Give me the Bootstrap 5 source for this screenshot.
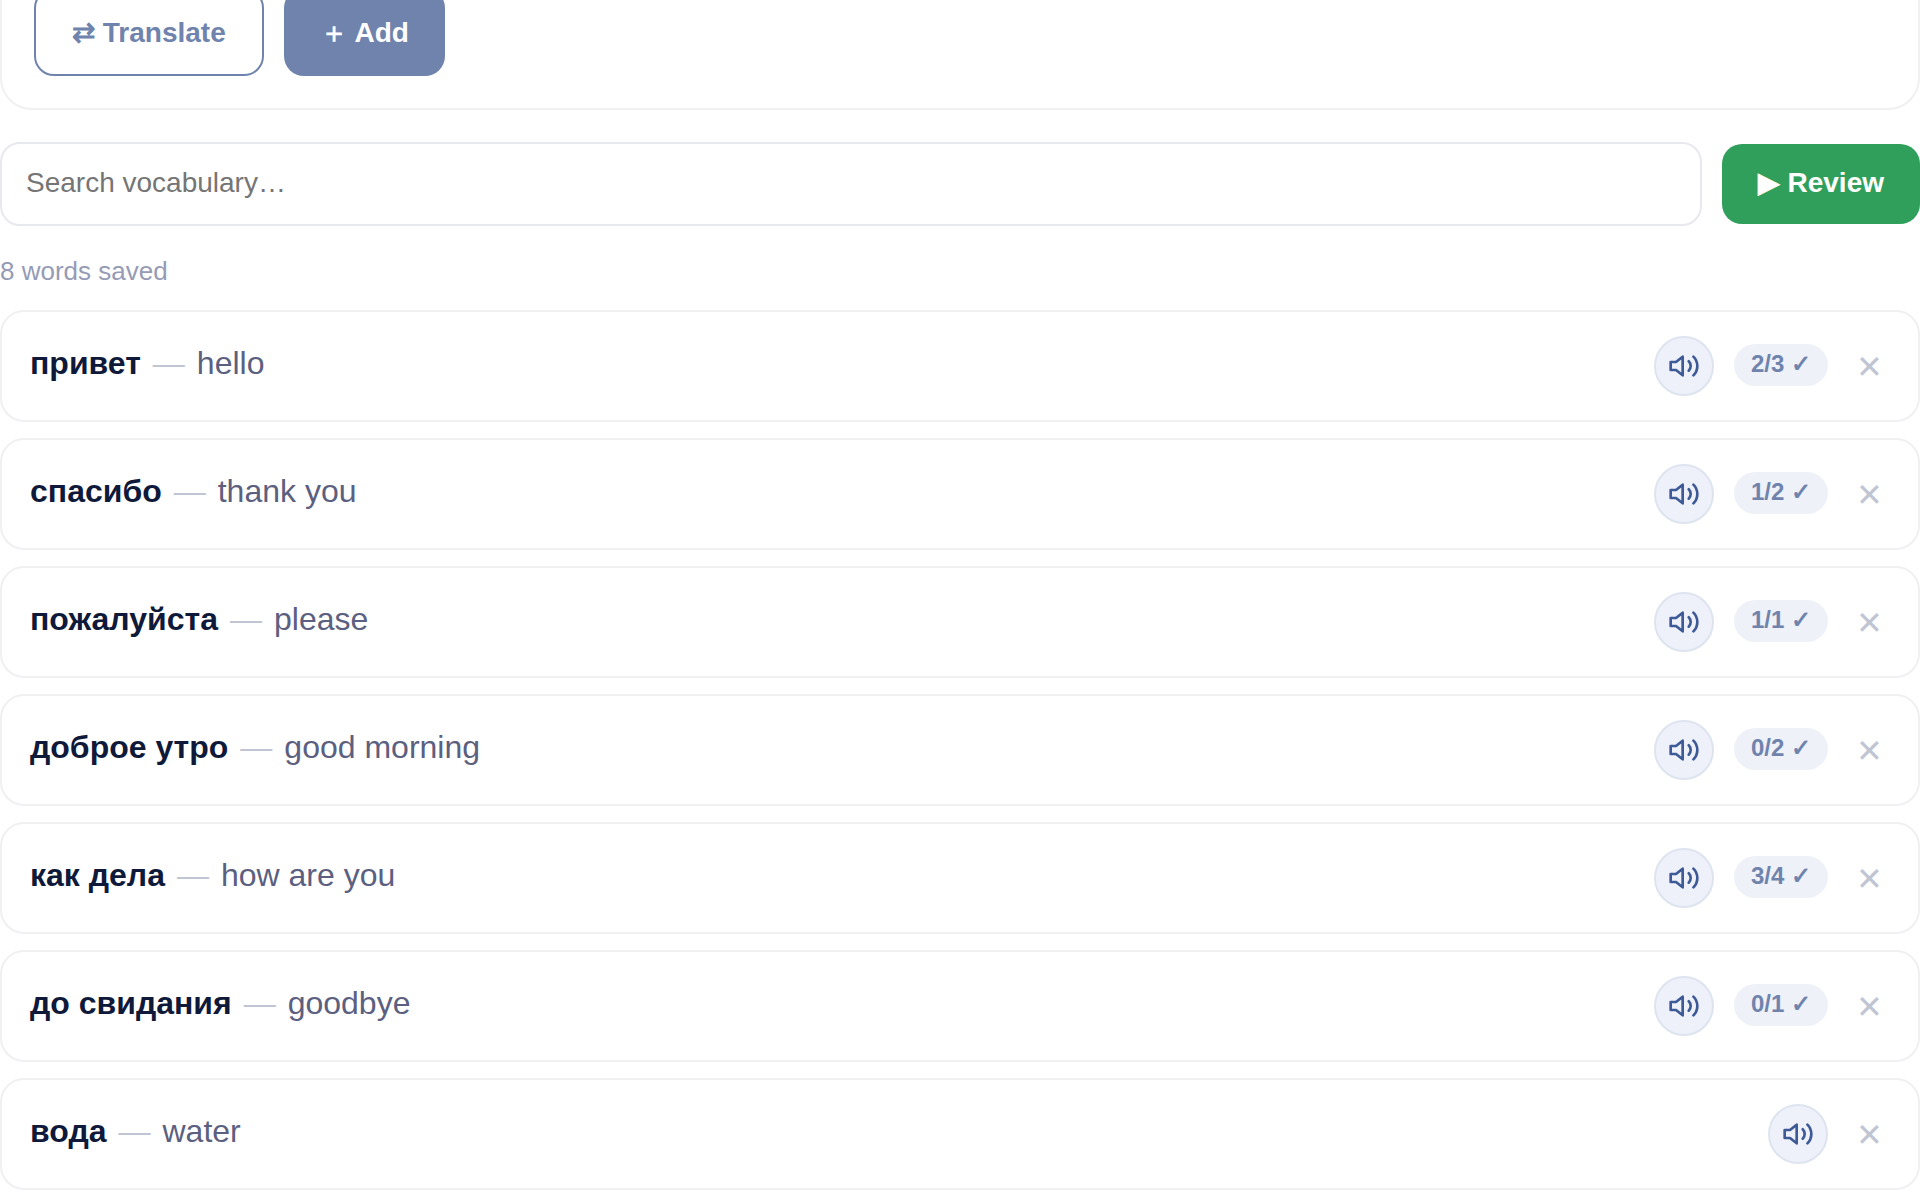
<!DOCTYPE html>
<html lang="en">
<head>
<meta charset="utf-8">
<meta name="viewport" content="width=device-width, initial-scale=1">
<title>Vocabulary</title>
<link href="https://cdn.jsdelivr.net/npm/bootstrap@5.3.0/dist/css/bootstrap.min.css" rel="stylesheet">
<style>
  body { font-family: "Liberation Sans", Arial, sans-serif; background: #fff; color: #0f1a3a; }
  .btn { --bs-btn-font-size: 28px; --bs-btn-font-weight: 700; --bs-btn-line-height: 42px; --bs-btn-border-radius: 20px; --bs-btn-padding-x: 36px; --bs-btn-border-width: 0; }
  .composer { margin-top: -46px; padding: 32px; border: 2px solid #f0f0f3; border-radius: 32px; }
  .toolbar-gap { gap: 20px; }
  .btn-translate { --bs-btn-color: #6f83ad; --bs-btn-border-color: #6f83ad; --bs-btn-border-width: 2px; padding-top: 22px; padding-bottom: 20px; }
  .btn-add { --bs-btn-color: #fff; --bs-btn-bg: #6f83ad; padding-top: 24px; padding-bottom: 22px; }
  .btn-review { --bs-btn-color: #fff; --bs-btn-bg: #2f9f5b; --bs-btn-line-height: 30px; padding-top: 24px; padding-bottom: 26px; }
  .search-row { margin-top: 32px; }
  .search-box { height: 84px; padding: 0 24px 2px; border: 2px solid #e8e8ef; border-radius: 20px; font-size: 28px; }
  .search-box::placeholder { color: #757575; }
  .word-count { margin: 30px 0 24px; font-size: 26px; line-height: 30px; color: #959bb5; }
  .word-list { gap: 16px; }
  .word-row { padding: 24px 28px; border: 2px solid #f0f0f3; border-radius: 24px; gap: 20px; }
  .word-text { gap: 12px; padding-bottom: 6px; font-size: 32px; line-height: 40px; }
  .dash { color: #c0c5d3; }
  .meaning { color: #5c6080; }
  .speak { width: 60px; height: 60px; border: 2px solid #dde4f0; background: #eef1f9; color: #3d5a96; }
  .score { margin-bottom: 2px; padding: 5px 17px 7px; border-radius: 21px; background: #eef1f8; color: #6f83ad; font-size: 24px; line-height: 30px; font-weight: 700; }
  .remove { width: 42px; padding: 2px 0 0; border: 0; background: transparent; color: #c0c5d3; font-size: 32px; line-height: 40px; }
</style>
</head>
<body>
<svg class="d-none" xmlns="http://www.w3.org/2000/svg">
  <symbol id="volume" viewBox="0 0 24 24" fill="none" stroke="currentColor" stroke-width="2" stroke-linecap="round" stroke-linejoin="round">
    <path d="M11 5 6 9H2v6h4l5 4z"/>
    <path d="M15.54 8.46a5 5 0 0 1 0 7.07"/>
    <path d="M19.07 4.93a10 10 0 0 1 0 14.14"/>
  </symbol>
</svg>
<main>
  <section class="composer d-flex toolbar-gap">
    <button type="button" class="btn btn-translate">⇄ Translate</button>
    <button type="button" class="btn btn-add">＋ Add</button>
  </section>

  <div class="search-row d-flex align-items-center toolbar-gap">
    <input type="search" class="search-box form-control flex-fill" placeholder="Search vocabulary…" aria-label="Search vocabulary">
    <button type="button" class="btn btn-review flex-shrink-0">▶ Review</button>
  </div>

  <p class="word-count">8 words saved</p>

  <ul class="word-list list-unstyled d-flex flex-column mb-0">
    <li class="word-row d-flex align-items-center">
      <div class="word-text d-flex flex-fill"><strong>привет</strong><span class="dash">—</span><span class="meaning">hello</span></div>
      <button type="button" class="speak rounded-circle d-flex align-items-center justify-content-center p-0" aria-label="Listen"><svg width="32" height="32"><use href="#volume"/></svg></button>
      <span class="score">2/3 ✓</span>
      <button type="button" class="remove" aria-label="Remove">✕</button>
    </li>
    <li class="word-row d-flex align-items-center">
      <div class="word-text d-flex flex-fill"><strong>спасибо</strong><span class="dash">—</span><span class="meaning">thank you</span></div>
      <button type="button" class="speak rounded-circle d-flex align-items-center justify-content-center p-0" aria-label="Listen"><svg width="32" height="32"><use href="#volume"/></svg></button>
      <span class="score">1/2 ✓</span>
      <button type="button" class="remove" aria-label="Remove">✕</button>
    </li>
    <li class="word-row d-flex align-items-center">
      <div class="word-text d-flex flex-fill"><strong>пожалуйста</strong><span class="dash">—</span><span class="meaning">please</span></div>
      <button type="button" class="speak rounded-circle d-flex align-items-center justify-content-center p-0" aria-label="Listen"><svg width="32" height="32"><use href="#volume"/></svg></button>
      <span class="score">1/1 ✓</span>
      <button type="button" class="remove" aria-label="Remove">✕</button>
    </li>
    <li class="word-row d-flex align-items-center">
      <div class="word-text d-flex flex-fill"><strong>доброе утро</strong><span class="dash">—</span><span class="meaning">good morning</span></div>
      <button type="button" class="speak rounded-circle d-flex align-items-center justify-content-center p-0" aria-label="Listen"><svg width="32" height="32"><use href="#volume"/></svg></button>
      <span class="score">0/2 ✓</span>
      <button type="button" class="remove" aria-label="Remove">✕</button>
    </li>
    <li class="word-row d-flex align-items-center">
      <div class="word-text d-flex flex-fill"><strong>как дела</strong><span class="dash">—</span><span class="meaning">how are you</span></div>
      <button type="button" class="speak rounded-circle d-flex align-items-center justify-content-center p-0" aria-label="Listen"><svg width="32" height="32"><use href="#volume"/></svg></button>
      <span class="score">3/4 ✓</span>
      <button type="button" class="remove" aria-label="Remove">✕</button>
    </li>
    <li class="word-row d-flex align-items-center">
      <div class="word-text d-flex flex-fill"><strong>до свидания</strong><span class="dash">—</span><span class="meaning">goodbye</span></div>
      <button type="button" class="speak rounded-circle d-flex align-items-center justify-content-center p-0" aria-label="Listen"><svg width="32" height="32"><use href="#volume"/></svg></button>
      <span class="score">0/1 ✓</span>
      <button type="button" class="remove" aria-label="Remove">✕</button>
    </li>
    <li class="word-row d-flex align-items-center">
      <div class="word-text d-flex flex-fill"><strong>вода</strong><span class="dash">—</span><span class="meaning">water</span></div>
      <button type="button" class="speak rounded-circle d-flex align-items-center justify-content-center p-0" aria-label="Listen"><svg width="32" height="32"><use href="#volume"/></svg></button>
      <button type="button" class="remove" aria-label="Remove">✕</button>
    </li>
  </ul>
</main>
<script src="https://cdn.jsdelivr.net/npm/bootstrap@5.3.0/dist/js/bootstrap.bundle.min.js"></script>
</body>
</html>
